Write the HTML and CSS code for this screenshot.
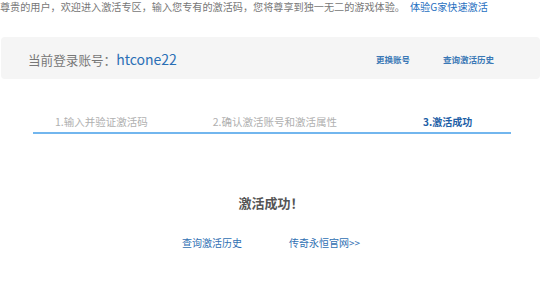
FILE: index.html
```html
<!DOCTYPE html>
<html lang="zh-CN">
<head>
    <meta charset="UTF-8">
    <meta name="viewport" content="width=device-width, initial-scale=1.0">
    <title>激活专区</title>
    <link rel="stylesheet" href="styles.css">
</head>
<body>
    <p class="intro">
        尊贵的用户，欢迎进入激活专区，输入您专有的激活码，您将尊享到独一无二的游戏体验。<a href="#" class="intro-link">体验G家快速激活</a>
    </p>

    <div class="account-bar">
        <div class="account">当前登录账号：<span class="account-name">htcone22</span></div>
        <div class="account-links">
            <a href="#">更换账号</a>
            <a href="#">查询激活历史</a>
        </div>
    </div>

    <div class="steps">
        <div class="step step-1">1.输入并验证激活码</div>
        <div class="step step-2">2.确认激活账号和激活属性</div>
        <div class="step step-3 active">3.激活成功</div>
    </div>

    <div class="result">
        <h2>激活成功！</h2>
        <div class="result-links">
            <a href="#">查询激活历史</a>
            <a href="#">传奇永恒官网&gt;&gt;</a>
        </div>
    </div>
</body>
</html>
```

FILE: styles.css
```css
body {
    font-family: "Noto Sans CJK SC", "Noto Sans", sans-serif;
    background-color: #fff;
    color: #666;
    margin: 0;
    padding: 0;
}
a {
    text-decoration: none;
    color: #2f70b3;
}
.intro {
    margin: 0;
    font-size: 10.15px;
    line-height: 14px;
    color: #777;
    white-space: nowrap;
}
.intro-link {
    margin-left: 5px;
    color: #1f6fbf;
}
.account-bar {
    display: flex;
    align-items: center;
    justify-content: space-between;
    height: 42px;
    margin: 23px 2px 0 1px;
    padding: 2px 46px 0 27px;
    box-sizing: border-box;
    background: #f5f5f5;
    border-radius: 4px;
}
.account {
    font-size: 12.6px;
    line-height: 18px;
    color: #777;
}
.account-name {
    font-size: 14px;
    color: #2a6fb5;
}
.account-links {
    display: flex;
    gap: 33px;
    font-size: 8.5px;
    line-height: 12px;
    font-weight: bold;
}
.account-links a {
    color: #3a78b5;
}
.steps {
    display: flex;
    margin: 36px 31px 0 33px;
    padding-bottom: 3px;
    border-bottom: 2px solid #72b6ee;
    font-size: 10.5px;
    line-height: 14px;
    color: #b0b0b0;
}
.step-1 {
    margin-left: 22px;
}
.step-2 {
    margin-left: 65px;
}
.step-3 {
    margin-left: 86px;
    font-size: 10px;
}
.step.active {
    color: #1d5ea6;
    font-weight: bold;
}
.result {
    text-align: center;
}
.result h2 {
    margin: 60px 0 0;
    font-size: 13px;
    line-height: 18px;
    color: #555;
}
.result-links {
    display: flex;
    justify-content: center;
    gap: 47px;
    margin-top: 24px;
    font-size: 10px;
    line-height: 14px;
}
```
